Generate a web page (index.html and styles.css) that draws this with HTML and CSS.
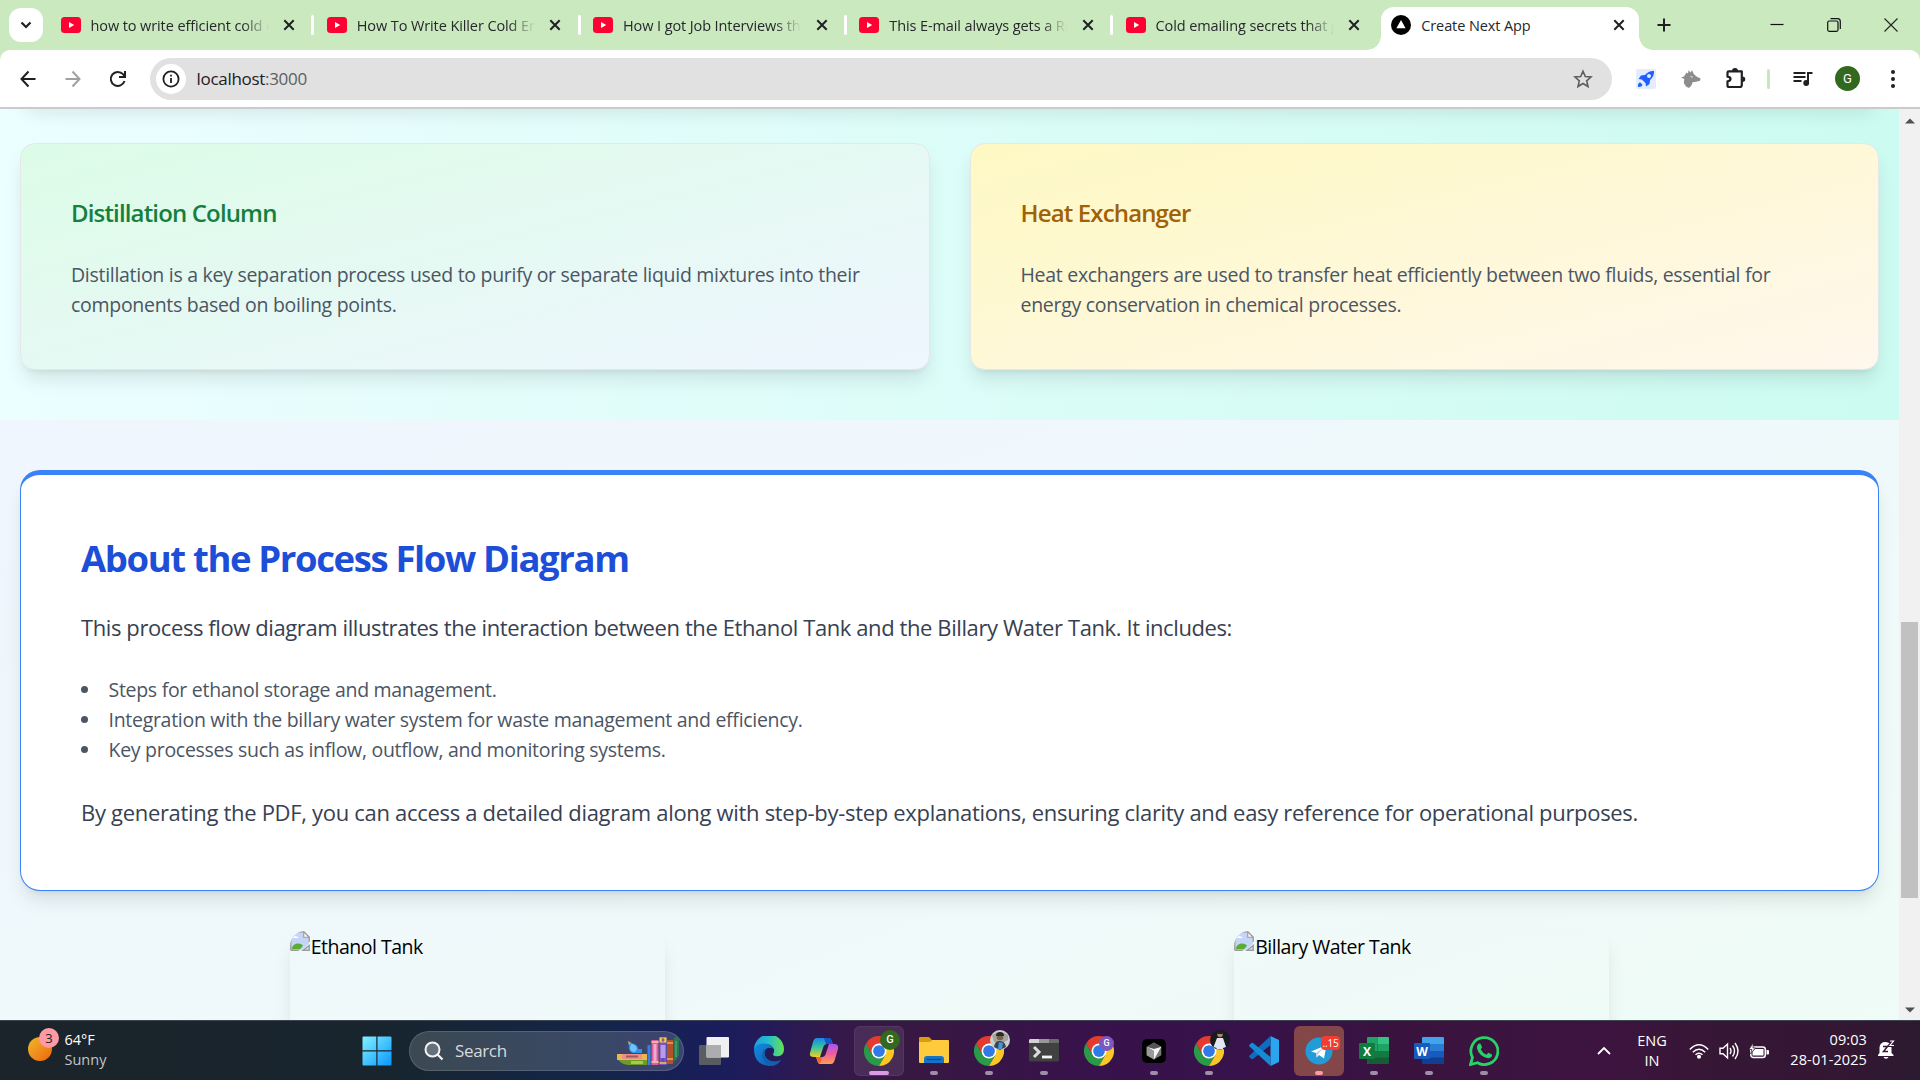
FILE: index.html
```html
<!DOCTYPE html>
<html lang="en">
<head>
<meta charset="utf-8">
<title>Create Next App</title>
<link rel="stylesheet" href="styles.css">
</head>
<body>
<svg class="defs" width="0" height="0">
  <symbol id="yt" viewBox="0 0 20 16"><rect width="20" height="16" rx="3.5" fill="#ff0033"/><path d="M8 5l5.2 3L8 11z" fill="#fff"/></symbol>
  <symbol id="close" viewBox="0 0 12 12"><path d="M1.3 1.3l9.4 9.4M10.7 1.3l-9.4 9.4" stroke="#1f2023" stroke-width="2" fill="none"/></symbol>
  <symbol id="chrome" viewBox="0 0 48 48">
    <path d="M3.2 12A24 24 0 0 1 44.8 12H24V24L13.6 30Z" fill="#e33b2e"/>
    <path d="M3.2 12L13.6 30L24 24L34.4 30L24 48A24 24 0 0 1 3.2 12Z" fill="#2a9a48"/>
    <path d="M44.8 12A24 24 0 0 1 24 48L34.4 30L24 24V12Z" fill="#fcc624"/>
    <circle cx="24" cy="24" r="12" fill="#fff"/><circle cx="24" cy="24" r="9.4" fill="#3279e8"/>
  </symbol>
  <symbol id="broken" viewBox="0 0 16 16">
    <path d="M.7.7H11L15.3 5V10L9.5 15.3H.7z" fill="#c5d5f5"/>
    <path d="M2.5 5.5q1-2 2.7-1.2Q6.8 4.3 6.8 5.5z" fill="#fff"/>
    <path d="M1.2 14.5Q2 11 5.5 10Q8.5 9.5 10.5 11.5L8 14.5z" fill="#58ad33"/>
    <path d="M.6 15.4V.6H11L15.4 5v3.5" fill="none" stroke="#9a9a9a" stroke-width="1"/>
    <path d="M11 .6V5h4.4z" fill="#fff" stroke="#9a9a9a" stroke-width=".9"/>
    <path d="M.6 15.4H7M10.5 15.4h4.900V11.5z" fill="#c5d5f5" stroke="#9a9a9a" stroke-width="1"/>
  </symbol>
</svg>

<header class="tabstrip">
  <div class="tab-search"><svg width="12" height="8" viewBox="0 0 12 8"><path d="M1.500 1.500L6 6l4.500-4.500" fill="none" stroke="#1f2023" stroke-width="2.200"/></svg></div>
  <div class="tab"><svg class="yt"><use href="#yt"/></svg><span class="tab-title">how to write efficient cold e</span><svg class="x"><use href="#close"/></svg><i class="tab-sep"></i></div>
  <div class="tab"><svg class="yt"><use href="#yt"/></svg><span class="tab-title">How To Write Killer Cold Em</span><svg class="x"><use href="#close"/></svg><i class="tab-sep"></i></div>
  <div class="tab"><svg class="yt"><use href="#yt"/></svg><span class="tab-title">How I got Job Interviews thr</span><svg class="x"><use href="#close"/></svg><i class="tab-sep"></i></div>
  <div class="tab"><svg class="yt"><use href="#yt"/></svg><span class="tab-title">This E-mail always gets a Re</span><svg class="x"><use href="#close"/></svg><i class="tab-sep"></i></div>
  <div class="tab"><svg class="yt"><use href="#yt"/></svg><span class="tab-title">Cold emailing secrets that g</span><svg class="x"><use href="#close"/></svg></div>
  <div class="tab tab-active"><svg width="20" height="20" viewBox="0 0 20 20"><circle cx="10" cy="10" r="10"/><path d="M10 5l4.600 8.300H5.400z" fill="#fff"/></svg><span class="tab-title">Create Next App</span><svg class="x"><use href="#close"/></svg></div>
  <svg class="new-tab" width="14" height="14" viewBox="0 0 14 14"><path d="M7 .5v13M.5 7h13" stroke="#1f2023" stroke-width="2"/></svg>
  <div class="win-controls">
    <svg width="14" height="14" viewBox="0 0 14 14"><path d="M.5 6.500h13" stroke="#111" stroke-width="1.200"/></svg>
    <svg width="14" height="14" viewBox="0 0 14 14" fill="none" stroke="#111" stroke-width="1.200"><rect x=".7" y="3" width="10.300" height="10.300" rx="1.500"/><path d="M3.500.7h7q2.800 0 2.800 2.800v7.500"/></svg>
    <svg width="14" height="14" viewBox="0 0 14 14"><path d="M.5.5l13 13M13.500.5l-13 13" stroke="#222" stroke-width="1.100"/></svg>
  </div>
</header>

<nav class="toolbar">
  <div class="slot"><svg width="16" height="18" viewBox="0 0 16 18" fill="none" stroke="#1f2023" stroke-width="2"><path d="M15.500 9H1.500M8.500 1.500L1.500 9l7 7.500"/></svg></div>
  <div class="slot"><svg width="16" height="18" viewBox="0 0 16 18" fill="none" stroke="#a0a0a0" stroke-width="2"><path d="M.5 9h14M7.500 1.500l7 7.500-7 7.500"/></svg></div>
  <div class="slot"><svg width="18" height="18" viewBox="0 0 18 18" fill="none" stroke="#1f2023" stroke-width="2"><path d="M15.500 11A7 7 0 1 1 14 4.200L16 6.500"/><path d="M16 1v6h-6"/></svg></div>
  <div class="omnibox">
    <span class="site-info"><svg width="18" height="18" viewBox="0 0 18 18"><circle cx="9" cy="9" r="7.600" fill="none" stroke="#1f2023" stroke-width="1.800"/><path d="M9 8v5M9 4.800v1.800" stroke="#1f2023" stroke-width="1.800"/></svg></span>
    <span class="url">localhost<span class="port">:3000</span></span>
    <svg class="star" width="20" height="20" viewBox="0 0 20 20"><path d="M10 2.200l2.300 5.300 5.700.5-4.300 3.800 1.300 5.700-5-3-5 3 1.300-5.700L2 8l5.700-.5z" fill="none" stroke="#5c5d60" stroke-width="1.600"/></svg>
  </div>
  <div class="slot slot-ext"><svg width="20" height="20" viewBox="0 0 20 20"><rect width="20" height="20" rx="2" fill="#e3edfd"/><path d="M18 2q-5-.5-9 4L5 6.500 2.500 10l3.300.6L9.500 14l.5 3.500 3.500-2.500.6-4Q18.500 7 18 2z" fill="#1f5eff"/><circle cx="13" cy="7" r="2" fill="#e3edfd"/><path d="M4 13.200q-2.300 1-2 4.800 3.800.2 4.600-2.200z" fill="#1f5eff"/></svg></div>
  <div class="slot"><svg width="20" height="18" viewBox="0 0 20 18"><path d="M0 7.500l3-1 2.500-4 1.500 1L7.500.2l2 2.300 1.500-2.300L12.800 4l2.700 2.500 4 2-.5 2.300-4 1-3.500.5-.8 2.700L8 18l-3-1.500L2.800 13l.5-4z" fill="#8d8d8d"/><path d="M9 6l3 .800-1 1z" fill="#fff"/></svg></div>
  <div class="slot"><svg width="20" height="21" viewBox="0 0 20 21"><path d="M2.800 3.500h13v13.700a2 2 0 0 1-2 2H2.800q-1.300 0-1.300-1.200v-4.500q3-.4 3-2.300t-3-2.300V4.700q0-1.200 1.300-1.200z" transform="translate(0 -.2)" fill="none" stroke="#1f2023" stroke-width="2.200" stroke-linejoin="round"/><path d="M6 3a3 3 0 0 1 6 0zM16.500 8.500a2.600 2.600 0 0 1 0 5.500z" fill="#1f2023"/></svg></div>
  <i class="bar-sep"></i>
  <div class="slot"><svg width="20" height="16" viewBox="0 0 20 16"><path d="M.5 2h12M.5 6h12M.5 10h8" stroke="#1f2023" stroke-width="1.900"/><path d="M15 12V2h4.500" fill="none" stroke="#1f2023" stroke-width="2"/><circle cx="13.200" cy="12" r="2.900" fill="#1f2023"/></svg></div>
  <div class="slot"><span class="avatar">G</span></div>
  <div class="slot"><svg width="4" height="18" viewBox="0 0 4 18" fill="#1f2023"><circle cx="2" cy="2" r="2"/><circle cx="2" cy="9" r="2"/><circle cx="2" cy="16" r="2"/></svg></div>
</nav>

<div class="viewport">
  <main class="page">
    <section class="equipment">
      <div class="card-above"></div>
      <div class="cards">
        <article class="card card-green"><h3>Distillation Column</h3><p>Distillation is a key separation process used to purify or separate liquid mixtures into their<br>components based on boiling points.</p></article>
        <article class="card card-yellow"><h3>Heat Exchanger</h3><p>Heat exchangers are used to transfer heat efficiently between two fluids, essential for<br>energy conservation in chemical processes.</p></article>
      </div>
    </section>
    <section class="process">
      <div class="about">
        <h2>About the Process Flow Diagram</h2>
        <p class="lead">This process flow diagram illustrates the interaction between the Ethanol Tank and the Billary Water Tank. It includes:</p>
        <ul>
          <li>Steps for ethanol storage and management.</li>
          <li>Integration with the billary water system for waste management and efficiency.</li>
          <li>Key processes such as inflow, outflow, and monitoring systems.</li>
        </ul>
        <p class="note">By generating the PDF, you can access a detailed diagram along with step-by-step explanations, ensuring clarity and easy reference for operational purposes.</p>
      </div>
      <div class="tanks">
        <div class="tank"><svg class="broken"><use href="#broken"/></svg><span>Ethanol Tank</span></div>
        <div class="tank"><svg class="broken"><use href="#broken"/></svg><span>Billary Water Tank</span></div>
      </div>
    </section>
  </main>
  <aside class="scrollbar">
    <svg width="10" height="6" viewBox="0 0 10 6"><path d="M5 .5L10 5.500H0z" fill="#505050"/></svg>
    <div class="track"><div class="thumb"></div></div>
    <svg width="10" height="6" viewBox="0 0 10 6"><path d="M5 5.500L10 .500H0z" fill="#505050"/></svg>
  </aside>
</div>

<footer class="taskbar">
  <div class="weather">
    <div class="sun"><span class="sun-badge">3</span></div>
    <div class="weather-text"><span>64°F</span><br><span class="dim">Sunny</span></div>
  </div>
  <div class="app start"><svg width="30" height="30" viewBox="0 0 30 30"><defs><linearGradient id="wg" x1="0" y1="0" x2="30" y2="30" gradientUnits="userSpaceOnUse"><stop stop-color="#84f3ff"/><stop offset="1" stop-color="#0795ff"/></linearGradient></defs><path d="M1.500.5H14.300V14.300H.5V1.500q0-1 1-1zM15.500.5H28.500q1 0 1 1V14.300H15.500zM.5 15.500H14.300V29.500H1.500q-1 0-1-1zM15.500 15.500H29.500V28.500q0 1-1 1H15.500z" fill="url(#wg)"/></svg></div>
  <div class="search">
    <svg width="20" height="20" viewBox="0 0 20 20" fill="none"><circle cx="8.500" cy="8.500" r="7" fill="#64727b" stroke="#f3f3f3" stroke-width="2"/><path d="M13.500 13.500l5 5" stroke="#f3f3f3" stroke-width="2.300"/></svg>
    <span class="search-label">Search</span>
    <svg class="books" width="62" height="30" viewBox="0 0 62 30">
      <path d="M1 23h29v6H11q-8-1-10-6z" fill="#6d9c24"/><path d="M14 25h12v3H14z" fill="#a2cc4b"/>
      <rect x="0" y="18" width="30" height="6" fill="#edb64e"/><rect x="5" y="18" width="20" height="5" rx="1" fill="#ec8f85"/><rect x="9" y="19.500" width="12" height="2" fill="#9c5a5d"/>
      <path d="M11 5l6 3q4 1 4 5h4v4H15q-4-3-3-7z" fill="#2d93e8"/><path d="M14 8q5 0 6 5l-2 3q-5 0-5-4z" fill="#72c2ff"/><path d="M11 5l3 2-2 2z" fill="#f0a020"/>
      <rect x="30.500" y="9" width="3" height="20" fill="#3f7ee0"/><rect x="34.500" y="4" width="7" height="25" fill="#d9609f"/><rect x="36.500" y="8" width="3" height="17" fill="#f6a8cb"/><path d="M34.500 6h7M34.500 26h7" stroke="#ffd0a0" stroke-width="1.500"/>
      <rect x="42.500" y="1" width="7" height="28" fill="#7c55c0"/><rect x="43.500" y="9" width="5" height="13" fill="#b49bec"/><path d="M42.500 4h7" stroke="#f5c94e" stroke-width="5"/><path d="M42.500 27h7" stroke="#f5c94e" stroke-width="1.500"/><path d="M46 2v4M44.500 4h3M46 22v4M44.500 24h3" stroke="#6543aa"/>
      <rect x="50" y="4" width="6" height="24" fill="#b5502c"/><path d="M50 7h6M50 23h6" stroke="#f1a55d" stroke-width="1.500"/>
      <path d="M56.500 4q0-3 3-3t3 4v12q-2 7-6 9z" fill="#277b50"/><path d="M59 5v16" stroke="#60b37d"/>
    </svg>
  </div>
  <div class="apps">
    <div class="app"><svg width="30" height="30" viewBox="0 0 30 30"><rect x="0" y="9" width="22" height="20" rx="1" fill="#595c60"/><rect x="7.500" y="1" width="22.500" height="20.500" rx="1" fill="#f0f0f2"/><path d="M7.500 9H22v12.500H7.500z" fill="#adadaf"/></svg></div>
    <div class="app"><svg width="30" height="30" viewBox="0 0 30 30"><defs><linearGradient id="e1"><stop stop-color="#1c9de0"/><stop offset=".5" stop-color="#25bfc9"/><stop offset="1" stop-color="#69e34f"/></linearGradient><linearGradient id="e2" x1="0" x2="1" y1="0" y2="1"><stop stop-color="#128be0"/><stop offset="1" stop-color="#1157ad"/></linearGradient></defs><path d="M0 14A15 15 0 0 1 30 13q0 7-6.500 7.300-4.500 0-4.500-2 1.500-2 1-5Q18 8 10 8 3 9 0 14z" fill="url(#e1)"/><path d="M0 15Q1 7.500 9.500 7.500q7.500 0 10 5.500-3-2-5.500-1-4 1.500-3.500 6 1 6 8 7.500 5 .5 8.500-1.500Q23 30 15 30 1 29 0 15z" fill="url(#e2)"/><path d="M10.500 18q1 6 8 7.500 5 .5 8.500-1.500Q23 30 18 29.700q-9-2-10-10 0-5 4-7.200-2 2-1.500 5.500z" fill="#1261b0"/></svg></div>
    <div class="app"><svg width="30" height="28" viewBox="0 0 30 28"><defs><linearGradient id="c1" x1="0" y1="0" x2="0" y2="1"><stop stop-color="#1985e8"/><stop offset=".5" stop-color="#38c5a0"/><stop offset="1" stop-color="#f5cf20"/></linearGradient><linearGradient id="c2" x1="0" y1="0" x2="0" y2="1"><stop stop-color="#a855f0"/><stop offset=".5" stop-color="#ef5e9d"/><stop offset="1" stop-color="#fba04e"/></linearGradient></defs><path d="M8 1h12q2 0 3 4l1 2h-6q-3 0-4 4l-3 9H5q-5 0-4-4L4 5q1-4 4-4z" fill="url(#c1)"/><path d="M15 1h5q2 0 3 4l1 2h-7z" fill="#1455ce"/><path d="M22 27H11q-2 0-3-4l-1-3h6q3 0 4-4l3-9h5q5 0 4 5l-3 10q-1 5-4 5z" fill="url(#c2)"/><path d="M7 20h6l-1 5q-1 2-3 0z" fill="#ef6330"/></svg></div>
    <div class="app current"><svg class="ico"><use href="#chrome"/></svg><span class="badge badge-g">G</span></div>
    <div class="app open"><svg width="30" height="28" viewBox="0 0 30 28"><path d="M0 1q0-1 1-1h9l3 3-2 4H0z" fill="#dc9d0b"/><path d="M0 5h11l2-2h16q1 0 1 1v21q0 1-1 1H1q-1 0-1-1z" fill="#fecb3c"/><path d="M5 26v-4q0-3 3-3h14q3 0 3 3v4z" fill="#1374c8"/><path d="M8 22.500h14" stroke="#0b4a8b" stroke-width="1.200"/></svg></div>
    <div class="app open"><svg class="ico"><use href="#chrome"/></svg><span class="badge"><svg width="20" height="20" viewBox="0 0 20 20"><circle cx="10" cy="10" r="10" fill="#ccd0ca"/><path d="M2 5q8-6 16 0v5l-4 2H4z" fill="#a4a49a"/><circle cx="10" cy="7" r="3.300" fill="#75614c"/><path d="M6 6q0-4 4-4t4 4z" fill="#282a2b"/><path d="M4 17q1-7 6-6 5 0 6 6l-6 3z" fill="#394554"/><path d="M9 12l4 1-1 6H8z" fill="#4695dd"/></svg></span></div>
    <div class="app open"><svg width="30" height="23" viewBox="0 0 30 23"><rect width="30" height="22.500" rx="1.500" fill="#414141"/><path d="M1 0h9v4H0V1z" fill="#d3d3d3"/><path d="M10 0h10v4H10z" fill="#979797"/><path d="M20 0h9l1 1v3H20z" fill="#6c6c6c"/><path d="M5 8l5 5-5 5" fill="none" stroke="#dcdcdc" stroke-width="3"/><path d="M13 18h10" stroke="#f3f3f3" stroke-width="2.800"/></svg></div>
    <div class="app"><svg class="ico"><use href="#chrome"/></svg><span class="badge badge-purple">G</span></div>
    <div class="app open"><svg width="24" height="24" viewBox="0 0 24 24"><rect width="24" height="24" rx="5" fill="#000"/><path d="M12 3.500l7.300 4.200v8.600L12 20.500l-7.300-4.200V7.700z" fill="#777"/><path d="M4.700 7.700h14.600L12 20.500V12z" fill="#f4f4f4"/><path d="M4.700 7.700L12 12v8.500l-7.300-4.200z" fill="#9a9a9a"/><path d="M4.700 7.700L12 3.500l7.300 4.200L12 10z" fill="#555"/></svg></div>
    <div class="app open"><svg class="ico"><use href="#chrome"/></svg><span class="badge"><svg width="20" height="20" viewBox="0 0 20 20"><circle cx="10" cy="10" r="10" fill="#171b20"/><circle cx="10" cy="4.500" r="2.700" fill="#b6826b"/><path d="M7.300 4q0-3 2.700-3t2.700 3z" fill="#222"/><path d="M7 8h6l3 9-3 1v1.500H6.500V18L3.500 17z" fill="#e1e7f3"/></svg></span></div>
    <div class="app"><svg width="30" height="30" viewBox="0 0 30 30"><path d="M21.500 0L30 4v22l-8.500 4z" fill="#2aa5ee"/><path d="M21.500 0v9L4 23q-1 .5-1.500 0L.5 21.200q-.8-.8 0-1.600z" fill="#0a6fc0"/><path d="M21.500 30v-9L4 7q-1-.5-1.500 0L.5 8.800q-.8.800 0 1.600z" fill="#158bd8"/></svg></div>
    <div class="app open alert"><svg width="28" height="28" viewBox="0 0 28 28"><circle cx="14" cy="14" r="13.500" fill="#229bd6"/><path d="M6 14.500L21.500 8 19 21.500l-5-3.500-2.500 2.500-.500-4.500z" fill="#fff"/><path d="M11 16l8-6-6 7-1.500 3z" fill="#b4cfe0"/></svg><span class="count">..15</span></div>
    <div class="app open"><svg width="30" height="28" viewBox="0 0 30 28"><path d="M8 1q0-1 1-1h9.500v27H8z" fill="#21a366"/><path d="M18.500 0h10.500q1 0 1 1v6H18.500z" fill="#33c481"/><path d="M18.500 7H30v7H18.500z" fill="#21a366"/><path d="M8 14h22v7H8z" fill="#107c41"/><path d="M8 20.500h22V26q0 1-1 1H9q-1 0-1-1z" fill="#185c37"/><rect x="0" y="6" width="16" height="16" rx="1" fill="#107c41"/><text x="8" y="18.500" text-anchor="middle" class="office">X</text></svg></div>
    <div class="app open"><svg width="30" height="28" viewBox="0 0 30 28"><path d="M8 1q0-1 1-1h20q1 0 1 1v6H8z" fill="#41a5ee"/><path d="M8 7h22v7H8z" fill="#2b7cd3"/><path d="M8 14h22v7H8z" fill="#185abd"/><path d="M8 20.500h22V26q0 1-1 1H9q-1 0-1-1z" fill="#103f91"/><rect x="0" y="6" width="16" height="16" rx="1" fill="#185abd"/><text x="8" y="18.500" text-anchor="middle" class="office">W</text></svg></div>
    <div class="app open"><svg width="30" height="30" viewBox="0 0 30 30"><path d="M1.500 28.500L3.500 21.500A13.500 13.500 0 1 1 8.500 26.700z" fill="none" stroke="#25d366" stroke-width="2.800"/><path d="M9.500 7.800q1-.8 2 0l1.500 3.200q.2.800-1.300 2.300 2 4 5.800 5.500 1.500-2 2.200-2l3 1.600q.8.600 0 2-1.500 2.200-4.700 1.600-8-2.200-10-9.500-.2-3 1.500-4.700z" fill="#25d366"/></svg></div>
  </div>
  <div class="tray">
    <svg class="chev" width="14" height="9" viewBox="0 0 14 9"><path d="M1 8l6-6 6 6" fill="none" stroke="#fff" stroke-width="1.800"/></svg>
    <div class="lang"><span>ENG</span><br><span>IN</span></div>
    <div class="status">
      <svg width="20" height="16" viewBox="0 0 20 16" fill="none" stroke="#fff" stroke-width="1.500"><path d="M.8 6.500Q10-2.800 19.200 6.500M3.800 9.200q6.200-6 12.400 0M6.500 11.800q3.500-3.200 7 0"/><circle cx="10" cy="13.800" r="1.300" fill="#fff"/></svg>
      <svg width="20" height="18" viewBox="0 0 20 18" fill="none" stroke="#fff" stroke-width="1.400"><path d="M1 6.200h3L8.500 2v14L4 11.800H1z"/><path d="M11 6q2 3 0 6M13.500 3.500q4 5.500 0 11M16 1q6 8 0 16"/></svg>
      <svg width="20" height="16" viewBox="0 0 20 16"><rect x="1.800" y="4" width="14.500" height="10.500" rx="2.500" fill="none" stroke="#fff" stroke-width="1.500"/><path d="M6 6h8.500v6.500H3.500V9z" fill="#fff"/><path d="M17.500 7h1.500q1 0 1 1v2.500q0 1-1 1h-1.500z" fill="#fff"/><path d="M4 0L0 6.500h3L1.500 11 6.500 5H4z" fill="#fff" stroke="#38143a" stroke-width=".7"/></svg>
    </div>
    <div class="clock"><span>09:03</span><br><span>28-01-2025</span></div>
    <svg class="bell" width="17" height="19" viewBox="0 0 17 19"><path d="M1.500 13V7.500Q2 2 7.500 2T13.500 8v5l2 2v1H0v-1z" fill="#fff"/><path d="M5.500 17h5q-.5 1.800-2.500 1.800T5.500 17z" fill="#fff"/><path d="M11.500 1h4l-4 4.500h4.500" fill="none" stroke="#38173a" stroke-width="3"/><path d="M5 6.500h4.500L5.500 11.500H10" fill="none" stroke="#38173a" stroke-width="1.500"/><path d="M12 1h3.500l-3.500 4.500h4" fill="none" stroke="#fff" stroke-width="1.200"/></svg>
  </div>
</footer>
</body>
</html>
```
FILE: styles.css
```css
* { box-sizing: border-box; margin: 0; padding: 0; }
body { width: 1920px; height: 1080px; overflow: hidden; display: flex; flex-direction: column; font-family: "Open Sans", "Noto Sans", sans-serif; background: #cae9bf; }
svg { display: block; flex: none; }
.defs { position: absolute; }

/* tab strip */
.tabstrip { flex: none; height: 50px; background: #cae9bf; display: flex; align-items: flex-start; }
.tab-search { width: 34px; height: 34px; margin: 8px 5.500px 0 8.500px; border-radius: 12px; background: #fff; display: flex; align-items: center; justify-content: center; }
.tab { flex: none; width: 266.250px; height: 50px; padding-left: 12.500px; display: flex; align-items: center; }
.yt { width: 20px; height: 16px; }
.tab-title { width: 178px; margin-left: 10px; overflow: hidden; white-space: nowrap; font-size: 14.500px; letter-spacing: -0.1px; color: #26282b; -webkit-mask-image: linear-gradient(to right, #000 152px, transparent 178px); mask-image: linear-gradient(to right, #000 152px, transparent 178px); }
.x { width: 12px; height: 12px; margin-left: 14.500px; }
.tab-sep { width: 3px; height: 20px; margin-left: auto; border-radius: 2px; background: #fff; }
.tab-active { position: relative; width: 257.500px; height: 43px; margin: 7px 0 0 2px; padding: 0 0 7px 10px; border-radius: 13px 13px 0 0; background: #fff; }
.tab-active::before, .tab-active::after { content: ""; position: absolute; bottom: 0; width: 14px; height: 14px; }
.tab-active::before { left: -14px; background: radial-gradient(circle at 0 0, transparent 13.500px, #fff 14px); }
.tab-active::after { right: -14px; background: radial-gradient(circle at 100% 0, transparent 13.500px, #fff 14px); }
.tab-active { padding-top: 0; }
.tab-active .tab-title { -webkit-mask-image: none; mask-image: none; width: 182px; }
.tab-active .x { margin-left: 10px; }
.new-tab { margin: 18px 0 0 18px; }
.win-controls { margin: 17.500px 22px 0 auto; display: flex; gap: 43px; }

/* toolbar */
.toolbar { flex: none; height: 59px; border-bottom: 2px solid #cbcbcb; border-radius: 10px 10px 0 0; padding-left: 5px; display: flex; align-items: center; background: #fff; }
.slot { flex: none; width: 45px; display: flex; justify-content: center; }
.omnibox { flex: none; width: 1462px; height: 42px; margin-left: 10px; padding: 0 19.500px 0 6px; border-radius: 21px; background: #e1e1e1; display: flex; align-items: center; }
.site-info { width: 30px; height: 30px; border-radius: 50%; background: #fff; display: flex; align-items: center; justify-content: center; }
.url { margin-left: 10.500px; font-size: 17px; letter-spacing: -0.3px; color: #1f2023; }
.port { color: #5c5d60; }
.star { margin-left: auto; }
.slot-ext { margin-left: 11px; }
.bar-sep { width: 3px; height: 20px; margin: 0 10.500px 0 8.500px; border-radius: 2px; background: #c6e9ba; }
.avatar { width: 25px; height: 25px; border-radius: 50%; background: #33691e; color: #fff; font: 13px/25px Roboto, sans-serif; text-align: center; }

/* page */
.viewport { flex: 1; min-height: 0; display: flex; overflow: hidden; }
.page { width: 1899px; overflow: hidden; display: flex; flex-direction: column; }
.equipment { flex: none; display: flow-root; height: 311px; padding: 0 20px; overflow: hidden; background: linear-gradient(to right, #ecfeff, #ccfbf1); }
.card-above { height: 30px; margin: -36px 0 40px; border-radius: 15px; }
.card-above, .card, .about, .tank { box-shadow: 0 12.500px 18.750px -3.750px rgba(0,0,0,.1), 0 5px 7.500px -5px rgba(0,0,0,.1); }
.cards { display: grid; grid-template-columns: repeat(2, minmax(0, 1fr)); gap: 40px; }
.card { height: 227px; padding: 50px; border: 1px solid #e5e7eb; border-radius: 15px; white-space: nowrap; }
.card-green { background: linear-gradient(to bottom right, #dcfce7, #eff6ff); }
.card-yellow { background: linear-gradient(to bottom right, #fef9c3, #fff7ed); }
.card h3 { font-size: 24px; line-height: 37px; font-weight: 600; letter-spacing: -0.85px; margin-bottom: 29px; }
.card-green h3 { color: #15803d; }
.card-yellow h3 { color: #a16207; }
.card p { font-size: 19.500px; line-height: 30px; letter-spacing: -0.29px; color: #4b5563; }
.process { flex: 1; padding: 50px 20px 0; background: linear-gradient(to bottom right, #eff6ff, #effcf6); }
.about { height: 421px; padding: 61px 60px 0; border: 1px solid #3b82f6; border-top-width: 5px; border-radius: 20px; background: #fff; white-space: nowrap; }
.about h2 { font-size: 36.500px; line-height: 45px; font-weight: 700; letter-spacing: -1.38px; color: #1d4ed8; margin-bottom: 29px; }
.about p { font-size: 22px; line-height: 35px; color: #374151; }
.lead { letter-spacing: -0.405px; }
.note { letter-spacing: -0.31px; }
.about ul { margin: 30px 0; list-style-position: inside; font-size: 19.500px; line-height: 30px; letter-spacing: -0.29px; color: #4b5563; }
.tanks { display: grid; grid-template-columns: repeat(2, minmax(0, 1fr)); gap: 30px; margin-top: 40px; justify-items: center; }
.tank { width: 375px; height: 200px; border-radius: 15px; overflow: hidden; display: flex; align-items: flex-start; font-size: 19.500px; line-height: 32px; letter-spacing: -0.5px; color: #000; }
.broken { width: 20px; height: 20px; margin-right: 1px; }
.scrollbar { flex: none; width: 21px; background: #f1f1f1; display: flex; flex-direction: column; align-items: center; justify-content: space-between; padding: 9px 0 7px; }
.track { flex: 1; width: 17px; padding-top: 498px; }
.thumb { height: 276px; background: #c1c1c1; }

/* taskbar */
.taskbar { flex: none; height: 60px; border-top: 1px solid #3d4650; display: flex; align-items: center; color: #fff; font-size: 14.500px; line-height: 20px; background: linear-gradient(to right, #1b242a 0, #18252e 380px, #14254a 600px, #1a1d5c 720px, #251a58 770px, #35194a 840px, #371842 910px, #37134a 1050px, #38124a 1250px, #39133e 1400px, #3d1440 1600px, #371636 1700px, #331733 1850px, #2b1a2f 1920px); }
.weather { width: 352px; padding-left: 28px; display: flex; align-items: center; }
.sun { position: relative; width: 24px; height: 24px; margin-top: -3px; border-radius: 50%; background: linear-gradient(135deg, #efb92d, #f0640c); }
.sun-badge { position: absolute; left: 11px; top: -9px; width: 20px; height: 20px; border-radius: 50%; background: #ff99a4; color: #222; font-size: 13px; text-align: center; }
.weather-text { margin-left: 12.500px; padding-bottom: 2px; white-space: nowrap; }
.dim { color: #c3c6c9; }
.app { position: relative; flex: none; width: 50px; height: 50px; border-radius: 6px; display: flex; align-items: center; justify-content: center; }
.search { width: 275px; height: 40px; margin: 0 5px 0 7px; padding: 0 4px 0 14px; border-radius: 20px; border: 1px solid rgba(255,255,255,.14); background: rgba(255,255,255,.16); display: flex; align-items: center; }
.search-label { margin-left: 11px; font-size: 17px; letter-spacing: -0.35px; color: #d7dadd; }
.books { margin-left: auto; }
.apps { display: flex; gap: 5px; }
.ico { width: 30px; height: 30px; }
.open::after, .current::after { content: ""; position: absolute; bottom: 1px; left: 21px; width: 8px; height: 4px; border-radius: 2px; background: #a08ea8; }
.current { background: rgba(255,255,255,.09); border: 1px solid rgba(255,255,255,.06); }
.current::after { left: 14px; bottom: 0; width: 20px; background: #d99be4; }
.badge { position: absolute; left: 26px; top: 4px; width: 20px; height: 20px; border-radius: 50%; font: 500 11px/20px Roboto, sans-serif; text-align: center; color: #fff; }
.badge-g { background: #33691e; left: 25px; top: 3px; }
.badge-purple { background: #7e57c2; width: 15px; height: 15px; left: 25px; top: 10px; line-height: 15px; font-size: 9px; }
.alert { background: #834749; }
.alert::after { background: #ff99a4; }
.count { position: absolute; left: 27px; top: 10px; width: 19px; height: 14px; border-radius: 4px; background: #f23c34; font-size: 10px; line-height: 14px; letter-spacing: -0.2px; text-align: center; }
.office { font: 700 12px "Open Sans", sans-serif; fill: #fff; }
.tray { margin-left: auto; display: flex; align-items: center; padding-right: 25px; white-space: nowrap; }
.lang { width: 50px; margin: 0 12px 0 16px; text-align: center; }
.status { display: flex; align-items: center; gap: 10px; width: 80px; }
.clock { width: 98px; padding-bottom: 2px; letter-spacing: 0.1px; text-align: right; }
.bell { margin: -2px 0 0 11px; }
```
